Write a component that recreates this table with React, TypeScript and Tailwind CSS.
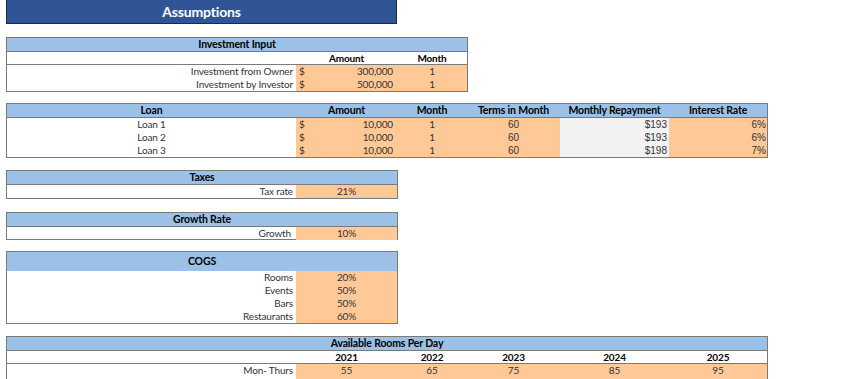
import React from "react";

const font = { fontFamily: "Lato, 'Open Sans', sans-serif", letterSpacing: "-0.15px" };

const cols = "grid grid-cols-[289px_101px_70px_93px_109px_98px] h-[13px]";
const orange = "bg-[#FFC997]";

function Money({ v }: { v: string }) {
  return (
    <div className={`${orange} flex justify-between pl-[3px] pr-[4px]`}>
      <span>$</span>
      <span>{v}</span>
    </div>
  );
}

function Arial({ children, className }: { children: React.ReactNode; className?: string }) {
  return (
    <div
      className={className}
      style={{ fontFamily: "'Liberation Sans', Arial, sans-serif", fontSize: 10, letterSpacing: 0 }}
    >
      {children}
    </div>
  );
}

function Header({ title, tall }: { title: string; tall?: boolean }) {
  return (
    <div
      className={`bg-[#9BC2E6] text-center font-bold text-black text-[10.5px] ${
        tall ? "h-[19px] leading-[19px]" : "h-[13px] leading-[13px]"
      }`}
    >
      {title}
    </div>
  );
}

export default function App() {
  const loans = [
    { name: "Loan 1", pay: "$193", rate: "6%" },
    { name: "Loan 2", pay: "$193", rate: "6%" },
    { name: "Loan 3", pay: "$198", rate: "7%" },
  ];
  const cogs = [
    ["Rooms", "20%"],
    ["Events", "50%"],
    ["Bars", "50%"],
    ["Restaurants", "60%"],
  ];
  const years = ["2021", "2022", "2023", "2024", "2025"];

  return (
    <div className="min-h-screen bg-white pl-[6px] text-[10px] leading-[13px] text-[#333]" style={font}>
      {/* title */}
      <div className="w-[391px] h-[24px] bg-[#2F5597] border border-[#1c2a44] border-t-0 text-white font-bold text-[14px] leading-[23px] text-center">
        Assumptions
      </div>

      {/* investment */}
      <div className="mt-[13px] w-[462px] border border-[#7a7a7a]">
        <Header title="Investment Input" />
        <div className={`${cols} !h-[14px] border-t border-b border-[#7a7a7a] font-bold text-black`}>
          <div />
          <div className="text-center">Amount</div>
          <div className="text-center">Month</div>
        </div>
        {[
          ["Investment from Owner", "300,000"],
          ["Investment by Investor", "500,000"],
        ].map(([l, v]) => (
          <div key={l} className={cols}>
            <div className="text-right pr-[3px]">{l}</div>
            <Money v={v} />
            <div className={`${orange} text-center`}>1</div>
          </div>
        ))}
      </div>

      {/* loan */}
      <div className="mt-[11px] w-[762px] border border-[#7a7a7a]">
        <div
          className={`${cols} bg-[#9BC2E6] !h-[14px] font-bold text-[10.5px] text-black border-b border-[#7a7a7a] text-center`}
        >
          <div>Loan</div>
          <div>Amount</div>
          <div>Month</div>
          <div>Terms in Month</div>
          <div>Monthly Repayment</div>
          <div>Interest Rate</div>
        </div>
        {loans.map((r) => (
          <div key={r.name} className={cols}>
            <div className="text-center">{r.name}</div>
            <Money v="10,000" />
            <div className={`${orange} text-center`}>1</div>
            <Arial className={`${orange} text-center`}>60</Arial>
            <Arial className="bg-[#F2F2F2] text-right pr-[2px]">{r.pay}</Arial>
            <Arial className={`${orange} text-right pr-[1px]`}>{r.rate}</Arial>
          </div>
        ))}
      </div>

      {/* taxes */}
      <div className="mt-[12px] w-[392px] border border-[#7a7a7a]">
        <Header title="Taxes" />
        <div className={`${cols} !h-[14px] border-t border-[#7a7a7a]`}>
          <div className="text-right pr-[3px]">Tax rate</div>
          <div className={`${orange} text-center`}>21%</div>
        </div>
      </div>

      {/* growth */}
      <div className="mt-[13px] w-[392px] border border-[#7a7a7a]">
        <Header title="Growth Rate" />
        <div className={`${cols} !h-[13px] border-t border-[#7a7a7a]`}>
          <div className="text-right pr-[5px]">Growth</div>
          <div className={`${orange} text-center`}>10%</div>
        </div>
      </div>

      {/* cogs */}
      <div className="mt-[11px] w-[392px] border border-[#7a7a7a]">
        <Header title="COGS" tall />
        {cogs.map(([l, v]) => (
          <div key={l} className={cols}>
            <div className="text-right pr-[3px]">{l}</div>
            <div className={`${orange} text-center`}>{v}</div>
          </div>
        ))}
      </div>

      {/* available rooms */}
      <div className="mt-[12px] w-[762px] border border-[#7a7a7a]">
        <Header title="Available Rooms Per Day" />
        <div className={`${cols} !h-[14px] border-t border-b border-[#7a7a7a] font-bold text-black`}>
          <div />
          {years.map((y) => (
            <div key={y} className="text-center">
              {y}
            </div>
          ))}
        </div>
        <div className={cols}>
          <div className="text-right pr-[3px]">Mon- Thurs</div>
          {["55", "65", "75", "85", "95"].map((v, i) => (
            <div key={i} className={`${orange} text-center`}>
              {v}
            </div>
          ))}
        </div>
        {/* next row continues below the fold */}
        <div className={cols}>
          <div />
          {years.map((y) => (
            <div key={y} className={orange} />
          ))}
        </div>
      </div>
    </div>
  );
}
